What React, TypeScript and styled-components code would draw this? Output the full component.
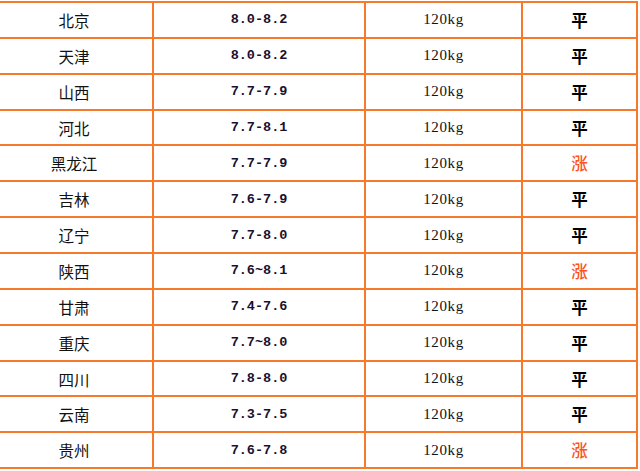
import React from 'react';
import styled, { createGlobalStyle } from 'styled-components';

interface Row {
  region: string;
  price: string;
  weight: string;
  trend: '平' | '涨';
}

const rows: Row[] = [
  { region: '北京', price: '8.0-8.2', weight: '120kg', trend: '平' },
  { region: '天津', price: '8.0-8.2', weight: '120kg', trend: '平' },
  { region: '山西', price: '7.7-7.9', weight: '120kg', trend: '平' },
  { region: '河北', price: '7.7-8.1', weight: '120kg', trend: '平' },
  { region: '黑龙江', price: '7.7-7.9', weight: '120kg', trend: '涨' },
  { region: '吉林', price: '7.6-7.9', weight: '120kg', trend: '平' },
  { region: '辽宁', price: '7.7-8.0', weight: '120kg', trend: '平' },
  { region: '陕西', price: '7.6~8.1', weight: '120kg', trend: '涨' },
  { region: '甘肃', price: '7.4-7.6', weight: '120kg', trend: '平' },
  { region: '重庆', price: '7.7~8.0', weight: '120kg', trend: '平' },
  { region: '四川', price: '7.8-8.0', weight: '120kg', trend: '平' },
  { region: '云南', price: '7.3-7.5', weight: '120kg', trend: '平' },
  { region: '贵州', price: '7.6-7.8', weight: '120kg', trend: '涨' },
];

const GlobalStyle = createGlobalStyle`
  html, body {
    margin: 0;
    padding: 0;
    background: #ffffff;
    overflow: hidden;
  }
`

const Wrapper = styled.div`
  width: 640px;
  height: 471px;
  overflow: hidden;
  background: #fff;
  padding-top: 1px;
  box-sizing: border-box;
`

const Table = styled.table`
  border-collapse: collapse;
  table-layout: fixed;
  width: 642px;
  margin-left: -6px;
`

const Col = styled.col<{ $w: number }>`
  width: ${p => p.$w}px;
`

const Cell = styled.td`
  border: 2px solid #f7792b;
  height: 33.86px;
  padding: 0;
  text-align: center;
  vertical-align: middle;
  color: #111;
`

const RegionCell = styled(Cell)`
  font-family: "Noto Sans CJK SC", sans-serif;
  font-size: 15.5px;
`

const PriceCell = styled(Cell)`
  font-family: "Liberation Mono", monospace;
  font-size: 13.5px;
  font-weight: bold;
  color: #1a1030;
`

const WeightCell = styled(Cell)`
  font-family: "Liberation Serif", serif;
  font-size: 15px;
  letter-spacing: 0.6px;
`

const TrendCell = styled(Cell)<{ $up: boolean }>`
  font-family: "Noto Sans CJK SC", sans-serif;
  font-size: 16.5px;
  font-weight: ${p => (p.$up ? 500 : 700)};
  color: ${p => (p.$up ? '#fc5320' : '#000')};
`

const App = () => {
  return (
    <Wrapper>
      <GlobalStyle />
      <Table>
        <colgroup>
          <Col $w={158} />
          <Col $w={212} />
          <Col $w={157} />
          <Col $w={115} />
        </colgroup>
        <tbody>
          {rows.map(row => (
            <tr key={row.region}>
              <RegionCell>{row.region}</RegionCell>
              <PriceCell>{row.price}</PriceCell>
              <WeightCell>{row.weight}</WeightCell>
              <TrendCell $up={row.trend === '涨'}>{row.trend}</TrendCell>
            </tr>
          ))}
        </tbody>
      </Table>
    </Wrapper>
  );
};

export default App;
